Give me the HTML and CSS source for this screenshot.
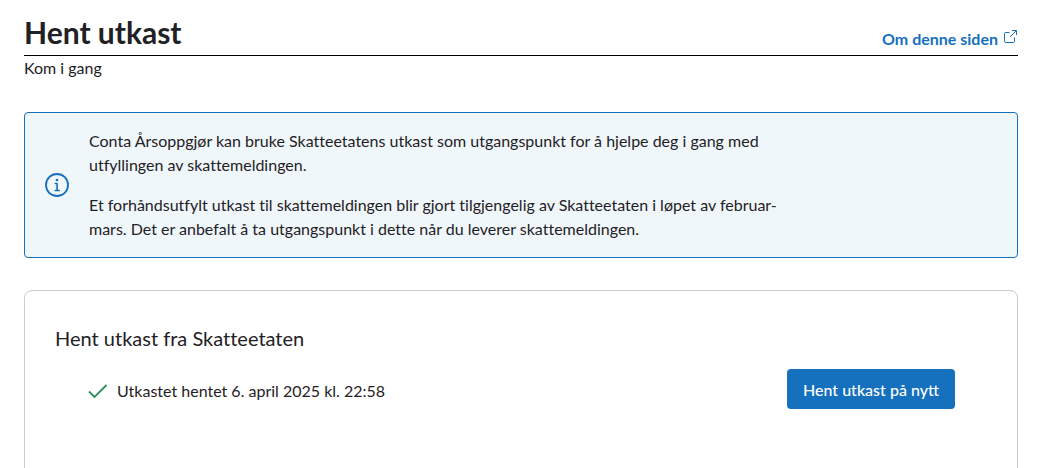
FILE: index.html
```html
<!DOCTYPE html>
<html lang="no">
<head>
<meta charset="utf-8">
<title>Hent utkast</title>
<link rel="stylesheet" href="styles.css">
</head>
<body>
<main class="page">
  <header class="page-header">
    <div class="title-row">
      <h1 class="title">Hent utkast</h1>
      <a class="about-link" href="#">Om denne siden
        <svg class="ext-icon" width="13" height="13" viewBox="0 0 13 13" fill="none" stroke="currentColor" stroke-width="1">
          <path d="M5.500 2.500H1.800a1.300 1.300 0 0 0-1.300 1.300v7.400a1.300 1.300 0 0 0 1.300 1.300h7.400a1.300 1.300 0 0 0 1.300-1.300V7.500"/>
          <path d="M6 7 12.200.8M8 .5h4.500V5"/>
        </svg>
      </a>
    </div>
    <p class="subtitle">Kom i gang</p>
  </header>

  <section class="info-box">
    <svg class="info-icon" width="24" height="24" viewBox="0 0 24 24" fill="none" stroke="currentColor">
      <circle cx="12" cy="12" r="11" stroke-width="1.800"/>
      <circle cx="12" cy="7" r="1.300" fill="currentColor" stroke="none"/>
      <path d="M10.200 10.500h1.900v6.500M10.200 17.500h4" stroke-width="1.600" stroke-linecap="round" stroke-linejoin="round"/>
    </svg>
    <div class="info-text">
      <p>Conta Årsoppgjør kan bruke Skatteetatens utkast som utgangspunkt for å hjelpe deg i gang med utfyllingen av skattemeldingen.</p>
      <p>Et forhåndsutfylt utkast til skattemeldingen blir gjort tilgjengelig av Skatteetaten i løpet av februar-<br>mars. Det er anbefalt å ta utgangspunkt i dette når du leverer skattemeldingen.</p>
    </div>
  </section>

  <section class="card">
    <h2 class="card-title">Hent utkast fra Skatteetaten</h2>
    <div class="status-row">
      <div class="status">
        <svg class="check" width="20" height="14" viewBox="0 0 20 14" fill="none" stroke="currentColor" stroke-width="1.800">
          <path d="M1 7.500 6.500 13 18.500 1"/>
        </svg>
        <span class="status-text">Utkastet hentet 6. april 2025 kl. 22:58</span>
      </div>
      <button class="primary-btn" type="button">Hent utkast på nytt</button>
    </div>
  </section>
</main>
</body>
</html>
```

FILE: styles.css
```css
* { box-sizing: border-box; }
html, body { margin: 0; height: 100%; overflow: hidden; background: #fff; }
body {
  font-family: Lato, "Liberation Sans", sans-serif;
  font-variant-ligatures: none;
  color: #1f2125;
}
.page { padding: 0 25px 0 24px; }
.page-header { padding-top: 12px; }
.title-row {
  display: flex;
  justify-content: space-between;
  align-items: flex-end;
  height: 44px;
  border-bottom: 1px solid #000;
}
.title { margin: 0 0 2px; font-size: 30px; line-height: 42px; font-weight: 700; }
.about-link {
  display: flex;
  align-items: center;
  gap: 6px;
  height: 34px;
  padding-right: 1px;
  color: #1570bd;
  font-size: 16px;
  font-weight: 700;
  text-decoration: none;
}
.ext-icon { margin-top: -4px; }
.subtitle { margin: 3px 0 0; font-size: 16px; line-height: 18px; }
.info-box {
  display: flex;
  align-items: center;
  margin-top: 35px;
  height: 146px;
  padding: 0 20px;
  background: #f0f7fb;
  border: 1px solid #1570bd;
  border-radius: 4px;
}
.info-icon { color: #1570bd; flex: none; margin-right: 20px; }
.info-text { width: 700px; font-size: 16px; line-height: 24px; }
.info-text p { margin: 0; }
.info-text p + p { margin-top: 16px; }
.card {
  margin-top: 32px;
  height: 260px;
  padding: 34px 30px;
  border: 1px solid #c5ccd3;
  border-radius: 8px;
}
.card-title { margin: 0; font-size: 20px; line-height: 26px; font-weight: 400; }
.status-row {
  display: flex;
  justify-content: space-between;
  align-items: center;
  margin-top: 18px;
  padding: 0 32px 0 33px;
}
.status { display: flex; align-items: center; gap: 9px; font-size: 16px; }
.status-text { padding-top: 2px; }
.check { color: #2f8f5b; flex: none; margin-top: 3px; }
.primary-btn {
  height: 40px;
  width: 168px;
  background: #1570bd;
  color: #fff;
  border: 0;
  border-radius: 4px;
  font-family: Lato, sans-serif;
  font-size: 16px;
  font-weight: 500;
}
```
